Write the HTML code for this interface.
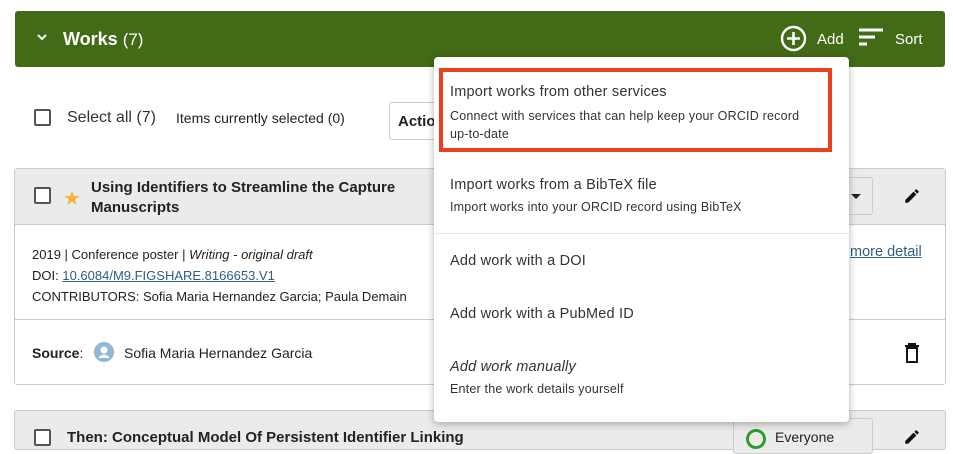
<!DOCTYPE html>
<html><head><meta charset="utf-8"><style>
*{box-sizing:border-box;margin:0;padding:0}
body{width:953px;height:436px;overflow:hidden;background:#fff;font-family:"Liberation Sans",sans-serif;color:#222;position:relative}
.abs{position:absolute}
.hdr{left:15px;top:11px;width:930px;height:56px;background:#426b17;border-radius:3px}
.cb{width:17px;height:17px;border:2px solid #555;border-radius:2px;background:#fff}
.card{border:1px solid #ccc;border-radius:3px;background:#fff}
.dd{left:434px;top:57px;width:415px;height:365px;background:#fff;border-radius:4px;box-shadow:0 2px 8px rgba(0,0,0,.3)}
.t1{font-size:14.5px;color:#333;letter-spacing:.2px}
.t2{font-size:12.5px;color:#333;letter-spacing:.2px}
</style></head><body>
<div class="abs hdr"></div>
<svg class="abs" style="left:36px;top:33px" width="12" height="10" viewBox="0 0 12 10"><path d="M2 2l4 4 4-4" stroke="#fff" stroke-width="2" fill="none"/></svg>
<div class="abs" style="left:63px;top:29px;color:#fff;font-size:18px;font-weight:bold">Works <span style="font-weight:normal;font-size:17px">(7)</span></div>
<svg class="abs" style="left:780px;top:25px" width="27" height="27" viewBox="0 0 27 27"><circle cx="13.5" cy="13.5" r="11.5" stroke="#fff" stroke-width="2.4" fill="none"/><path d="M13.5 7v13M7 13.5h13" stroke="#fff" stroke-width="2.6"/></svg>
<div class="abs" style="left:817px;top:31px;color:#fff;font-size:15px">Add</div>
<svg class="abs" style="left:859px;top:28px" width="26" height="20"><path d="M0 2h24M0 9h16M0 16h8" stroke="#fff" stroke-width="3"/></svg>
<div class="abs" style="left:895px;top:31px;color:#fff;font-size:15px">Sort</div>

<div class="abs cb" style="left:34px;top:109px"></div>
<div class="abs" style="left:67px;top:109px;font-size:16px;color:#333">Select all (7)</div>
<div class="abs" style="left:176px;top:110px;font-size:14px">Items currently selected (0)</div>
<div class="abs" style="left:389px;top:102px;width:60px;height:38px;border:1px solid #ccc;border-radius:3px;padding:10px 8px;font-weight:bold;font-size:15px">Action</div>

<div class="abs card" style="left:14px;top:168px;width:932px;height:217px"></div>
<div class="abs" style="left:15px;top:169px;width:930px;height:56px;background:#ebebeb;border-bottom:1px solid #ccc"></div>
<div class="abs cb" style="left:34px;top:187px"></div>
<div class="abs" style="left:63px;top:186px;color:#f5b335;font-size:20px">★</div>
<div class="abs" style="left:91px;top:178px;font-size:15px;font-weight:bold;line-height:20px;width:360px">Using Identifiers to Streamline the Capture<br>Manuscripts</div>
<div class="abs" style="left:835px;top:177px;width:38px;height:38px;border:1px solid #ccc;border-radius:3px"></div>
<svg class="abs" style="left:850px;top:193px" width="12" height="8"><path d="M1 1h10L6 6z" fill="#222"/></svg>
<svg class="abs" style="left:903px;top:187px" width="18" height="18" viewBox="0 0 24 24"><path d="M3 17.25V21h3.75L17.81 9.94l-3.75-3.75L3 17.25zM20.71 7.04a1 1 0 000-1.41l-2.34-2.34a1 1 0 00-1.41 0l-1.83 1.83 3.75 3.75 1.83-1.83z" fill="#111"/></svg>
<div class="abs" style="left:32px;top:244px;font-size:13px;line-height:21px">2019 | Conference poster | <i>Writing - original draft</i><br>DOI: <span style="color:#2e5f82;text-decoration:underline">10.6084/M9.FIGSHARE.8166653.V1</span><br>CONTRIBUTORS: Sofia Maria Hernandez Garcia; Paula Demain</div>
<div class="abs" style="left:850px;top:244px;font-size:14.5px;color:#2e5f82;text-decoration:underline">more detail</div>
<div class="abs" style="left:15px;top:319px;width:930px;height:1px;background:#ccc"></div>
<div class="abs" style="left:32px;top:345px;font-size:14px"><b>Source</b>:</div>
<svg class="abs" style="left:94px;top:342px" width="20" height="20"><circle cx="10" cy="10" r="10" fill="#8fb8d8"/><circle cx="10" cy="8" r="3.5" fill="#fff"/><path d="M4 16q6-7 12 0" fill="#fff"/></svg>
<div class="abs" style="left:124px;top:345px;font-size:14px">Sofia Maria Hernandez Garcia</div>
<svg class="abs" style="left:904px;top:343px" width="16" height="20" viewBox="0 0 16 20"><path d="M1 3h14M5 3V1h6v2M3 5h10v14H3z" stroke="#111" stroke-width="2" fill="none"/></svg>

<div class="abs card" style="left:14px;top:410px;width:932px;height:40px;background:#ebebeb"></div>
<div class="abs cb" style="left:34px;top:429px"></div>
<div class="abs" style="left:67px;top:429px;font-size:15px;font-weight:bold">Then: Conceptual Model Of Persistent Identifier Linking</div>
<div class="abs" style="left:733px;top:418px;width:140px;height:36px;border:1px solid #ccc;border-radius:3px;background:#ebebeb"></div>
<div class="abs" style="left:746px;top:429px;width:20px;height:20px;border-radius:50%;border:3px solid #2a9d2a"></div>
<div class="abs" style="left:775px;top:429px;font-size:14px">Everyone</div>
<svg class="abs" style="left:903px;top:428px" width="18" height="18" viewBox="0 0 24 24"><path d="M3 17.25V21h3.75L17.81 9.94l-3.75-3.75L3 17.25zM20.71 7.04a1 1 0 000-1.41l-2.34-2.34a1 1 0 00-1.41 0l-1.83 1.83 3.75 3.75 1.83-1.83z" fill="#111"/></svg>

<div class="abs dd"></div>
<div class="abs" style="left:439px;top:68px;width:393px;height:84px;border:4px solid #e8401c"></div>
<div class="abs t1" style="left:450px;top:84px">Import works from other services</div>
<div class="abs t2" style="left:450px;top:107px;line-height:18px;white-space:nowrap">Connect with services that can help keep your ORCID record<br>up-to-date</div>
<div class="abs t1" style="left:450px;top:177px">Import works from a BibTeX file</div>
<div class="abs t2" style="left:450px;top:200px">Import works into your ORCID record using BibTeX</div>
<div class="abs" style="left:434px;top:233px;width:415px;height:1px;background:#e6e6e6"></div>
<div class="abs t1" style="left:450px;top:253px">Add work with a DOI</div>
<div class="abs t1" style="left:450px;top:306px">Add work with a PubMed ID</div>
<div class="abs t1" style="left:450px;top:359px;font-style:italic">Add work manually</div>
<div class="abs t2" style="left:450px;top:382px">Enter the work details yourself</div>
</body></html>
